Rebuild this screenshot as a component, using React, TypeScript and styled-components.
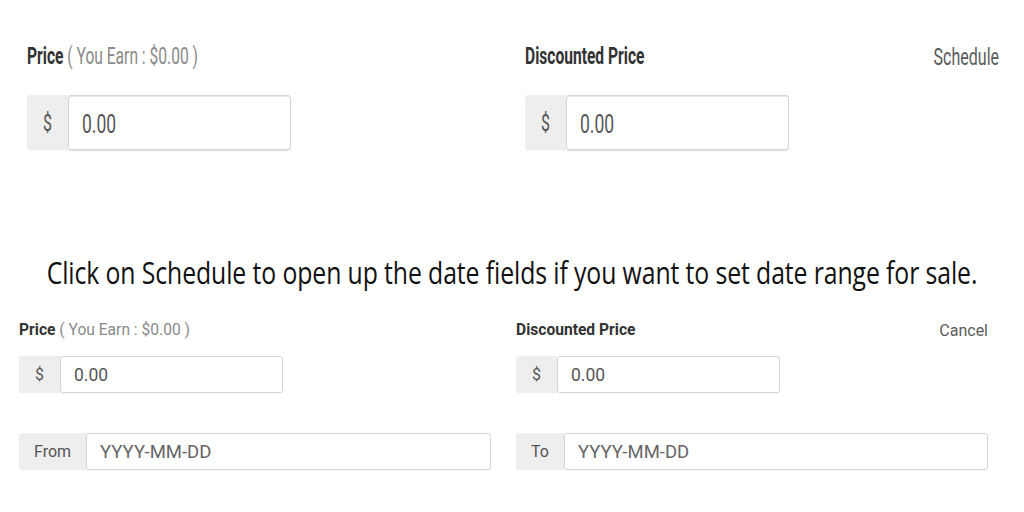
import { createGlobalStyle, styled } from "styled-components";

const GlobalStyle = createGlobalStyle`
    html, body {
        margin: 0;
        padding: 0;
        background: #ffffff;
    }
    body {
        font-family: Roboto, "Liberation Sans", sans-serif;
    }
`;

type FormProps = {
    action: string;
    withDates?: boolean;
    col: number;
    gap: number;
};

const PriceForm = ({ action, withDates, col, gap }: FormProps) => (
    <Grid $col={col} $gap={gap}>
        <Column>
            <LabelRow>
                <Label>
                    Price <Hint>( You Earn : $0.00 )</Hint>
                </Label>
            </LabelRow>
            <InputGroup $width={264}>
                <Addon $minWidth={41}>$</Addon>
                <Field readOnly defaultValue="0.00" />
            </InputGroup>
            {withDates && (
                <DateRow>
                    <InputGroup>
                        <Addon>From</Addon>
                        <Field readOnly $size={18.5} placeholder="YYYY-MM-DD" />
                    </InputGroup>
                </DateRow>
            )}
        </Column>
        <Column>
            <LabelRow>
                <Label>Discounted Price</Label>
                <Action>{action}</Action>
            </LabelRow>
            <InputGroup $width={264}>
                <Addon $minWidth={41}>$</Addon>
                <Field readOnly defaultValue="0.00" />
            </InputGroup>
            {withDates && (
                <DateRow>
                    <InputGroup>
                        <Addon>To</Addon>
                        <Field readOnly $size={18.5} placeholder="YYYY-MM-DD" />
                    </InputGroup>
                </DateRow>
            )}
        </Column>
    </Grid>
);

const App = () => (
    <>
        <GlobalStyle />
        <Page>
            <Shot $left={27} $height={110}>
                <Stretch>
                    <PriceForm action="Schedule" col={474} gap={24} />
                </Stretch>
            </Shot>
            <Caption>
                <span>Click on Schedule to open up the date fields if you want to set date range for sale.</span>
            </Caption>
            <Shot $left={19}>
                <PriceForm action="Cancel" withDates col={472} gap={25} />
            </Shot>
        </Page>
    </>
);

export default App;

const Page = styled.div`
    width: 1024px;
    height: 512px;
    overflow: hidden;
    padding-top: 41px;
    box-sizing: border-box;
    display: flex;
    flex-direction: column;
`;

const Shot = styled.div<{ $left: number; $height?: number }>`
    padding-left: ${(p) => p.$left}px;
    height: ${(p) => (p.$height ? `${p.$height}px` : "auto")};
`;

const Stretch = styled.div`
    transform: scaleY(1.5);
    transform-origin: top left;
`;

const Grid = styled.div<{ $col: number; $gap: number }>`
    display: grid;
    grid-template-columns: ${(p) => p.$col}px ${(p) => p.$col}px;
    column-gap: ${(p) => p.$gap}px;
`;

const Column = styled.div`
    display: flex;
    flex-direction: column;
`;

const LabelRow = styled.div`
    height: 20px;
    display: flex;
    align-items: center;
    justify-content: space-between;
    margin-bottom: 16px;
`;

const Label = styled.div`
    font-size: 15.6px;
    font-weight: 700;
    color: #333333;
`;

const Hint = styled.span`
    font-weight: 400;
    color: #8a8a8a;
`;

const Action = styled.div`
    font-size: 16px;
    color: #5a5a5a;
`;

const InputGroup = styled.div<{ $width?: number }>`
    display: flex;
    height: 37px;
    width: ${(p) => (p.$width ? `${p.$width}px` : "100%")};
`;

const Addon = styled.div<{ $minWidth?: number }>`
    min-width: ${(p) => p.$minWidth ?? 0}px;
    padding: 0 15px;
    box-sizing: border-box;
    display: flex;
    align-items: center;
    justify-content: center;
    background: #eeeeee;
    border-radius: 3px 0 0 3px;
    font-size: 16px;
    color: #555555;
`;

const Field = styled.input<{ $size?: number }>`
    flex: 1;
    min-width: 0;
    box-sizing: border-box;
    border: 1px solid #d5d5d5;
    border-radius: 3px;
    padding: 0 13px;
    font-family: Roboto, "Liberation Sans", sans-serif;
    font-size: ${(p) => p.$size ?? 17.5}px;
    color: #555555;
    outline: none;
    background: #ffffff;
    box-shadow: 0 1px 1px rgba(0, 0, 0, 0.04);
    &::placeholder {
        color: #666666;
        opacity: 1;
    }
`;

const DateRow = styled.div`
    margin-top: 40px;
`;

const Caption = styled.div`
    margin-top: 105px;
    margin-bottom: 34px;
    height: 30px;
    display: flex;
    align-items: center;
    justify-content: center;
    span {
        display: inline-block;
        font-family: "Open Sans", "Liberation Sans", sans-serif;
        font-size: 24.8px;
        letter-spacing: -0.1px;
        color: #111111;
        white-space: nowrap;
        transform: scaleY(1.25);
    }
`;
